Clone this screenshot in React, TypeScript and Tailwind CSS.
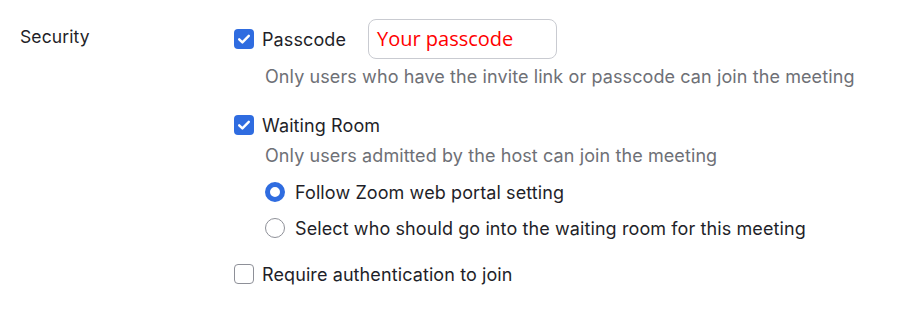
import React from 'react';

const Checkbox: React.FC<{ checked?: boolean }> = ({ checked }) =>
  checked ? (
    <span className="flex h-5 w-5 shrink-0 items-center justify-center rounded-[4px] bg-[#2f6ce0]">
      <svg viewBox="0 0 20 20" className="h-5 w-5" fill="none">
        <path d="M5.2 10.3l3.2 3.1 6.4-6.6" stroke="#fff" strokeWidth="2.4" strokeLinecap="round" strokeLinejoin="round" />
      </svg>
    </span>
  ) : (
    <span className="h-5 w-5 shrink-0 rounded-[4px] border-[1.5px] border-[#8e9098] bg-white" />
  );

const Radio: React.FC<{ checked?: boolean }> = ({ checked }) =>
  checked ? (
    <span className="h-5 w-5 shrink-0 rounded-full border-[5px] border-[#2f6ce0] bg-white" />
  ) : (
    <span className="h-5 w-5 shrink-0 rounded-full border-[1.5px] border-[#8e9098] bg-white" />
  );

export default function App() {
  return (
    <div className="flex h-[313px] w-[900px] bg-white pt-[19px] text-[18px] tracking-[0.1px] text-[#1f1f29] [font-family:Inter,'Liberation_Sans',sans-serif]">
      <div className="w-[234px] shrink-0 pl-5">
        <div className="flex h-10 items-center pb-1 text-[17.5px]">Security</div>
      </div>
      <div className="flex flex-col">
        <div className="flex h-10 items-center">
          <Checkbox checked />
          <span className="ml-2">Passcode</span>
          <div className="ml-[22px] flex h-[40px] w-[189px] items-center rounded-lg border border-[#c9cbd1] pl-[8px] text-[20px] tracking-normal text-[#ff0000] [font-family:'Open_Sans',sans-serif]">
            Your passcode
          </div>
        </div>
        <div className="mt-[6px] h-6 pl-[31px] leading-6 text-[#6e7076]">
          Only users who have the invite link or passcode can join the meeting
        </div>
        <div className="mt-6 flex h-6 items-center">
          <Checkbox checked />
          <span className="ml-2">Waiting Room</span>
        </div>
        <div className="mt-[7px] h-6 pl-[31px] leading-6 text-[#6e7076]">
          Only users admitted by the host can join the meeting
        </div>
        <div className="mt-3 flex h-6 items-center pl-[31px]">
          <Radio checked />
          <span className="ml-[10px]">Follow Zoom web portal setting</span>
        </div>
        <div className="mt-3 flex h-6 items-center pl-[31px]">
          <Radio />
          <span className="ml-[10px]">Select who should go into the waiting room for this meeting</span>
        </div>
        <div className="mt-[22px] flex h-6 items-center">
          <Checkbox />
          <span className="ml-2">Require authentication to join</span>
        </div>
      </div>
    </div>
  );
}
